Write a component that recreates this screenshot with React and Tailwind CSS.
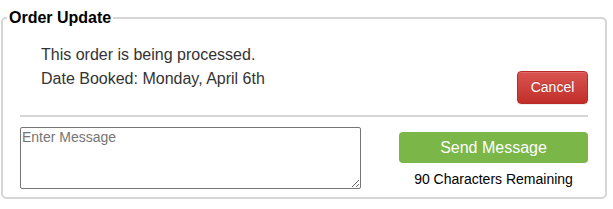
import React, { useState } from 'react';

const MAX_CHARS = 90;

function App() {
  const [message, setMessage] = useState('');

  return (
    <div className="min-h-[209px] bg-white font-['Liberation_Sans',Arial,sans-serif] text-[#333]">
      <fieldset className="ml-[1px] mt-[9px] w-[606px] rounded-[5px] border-2 border-[#d6d6d6] pl-[4px]">
        <legend className="px-[2px] text-[16px] font-bold leading-[18px] text-black">
          Order Update
        </legend>

        <div className="pb-[8px] pl-[13px] pr-[17px] pt-[16px]">
          <div className="flex justify-between">
            <div className="ml-[21px] text-[16px] leading-[24px]">
              <p>This order is being processed.</p>
              <p>Date Booked: Monday, April 6th</p>
            </div>
            <button
              type="button"
              className="mt-[28px] h-[33px] w-[71px] rounded-[4px] border border-[#b92c28] bg-gradient-to-b from-[#d9534f] to-[#c12e2a] text-[14px] text-white shadow-[inset_0_1px_0_rgba(255,255,255,0.15),0_1px_1px_rgba(0,0,0,0.075)] [text-shadow:0_-1px_0_rgba(0,0,0,0.2)]"
            >
              Cancel
            </button>
          </div>

          <hr className="mt-[11px] border-t-2 border-[#d6d6d6]" />

          <div className="mt-[10px] flex justify-between">
            <textarea
              value={message}
              maxLength={MAX_CHARS}
              onChange={(e) => setMessage(e.target.value)}
              placeholder="Enter Message"
              className="h-[62px] w-[341px] rounded-[2px] border border-[#767676] px-[1px] py-[1px] text-[14px] leading-[16px] text-black outline-none placeholder:text-[#757575]"
            />
            <div className="mt-[5px] flex w-[189px] flex-col items-center">
              <button
                type="button"
                className="h-[31px] w-full rounded-[4px] bg-[#7ab648] text-[16px] text-white"
              >
                Send Message
              </button>
              <span className="mt-[8px] text-[14px] leading-[16px] text-black">
                {MAX_CHARS - message.length} Characters Remaining
              </span>
            </div>
          </div>
        </div>
      </fieldset>
    </div>
  );
}

export default App;
